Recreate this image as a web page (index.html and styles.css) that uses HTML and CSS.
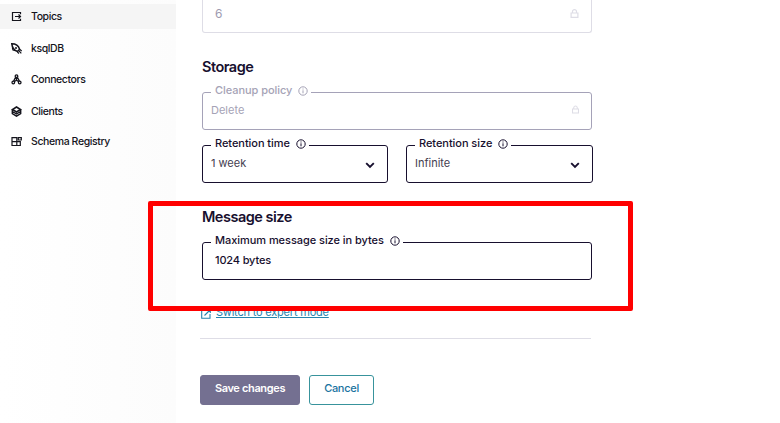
FILE: index.html
```html
<!DOCTYPE html>
<html lang="en">
<head>
    <meta charset="UTF-8">
    <meta name="viewport" content="width=device-width, initial-scale=1.0">
    <title>Topic settings</title>
    <link rel="stylesheet" href="styles.css">
</head>
<body>
    <svg class="defs">
        <symbol id="info" viewBox="0 0 10 10">
            <circle cx="5" cy="5" r="4.2" fill="none" stroke="currentColor" stroke-width="1"/>
            <path d="M5 4.3v3M5 2.5v1" stroke="currentColor" stroke-width="1"/>
        </symbol>
        <symbol id="lock" viewBox="0 0 8 9">
            <path d="M2 4V2.6a2 2 0 0 1 4 0V4M.6 4h6.8v4.4H.6z" fill="none" stroke="currentColor" stroke-width="1.2"/>
        </symbol>
        <symbol id="chevron" viewBox="0 0 10 7">
            <path d="M1.2 1.2L5 5l3.8-3.8" fill="none" stroke="currentColor" stroke-width="1.9"/>
        </symbol>
    </svg>

    <div class="page">
        <nav class="sidebar">
            <a class="nav-item active">
                <svg viewBox="0 0 11 11"><path d="M9.5 3.2V1.5h-8v8h8V7.8M4 5.5h5.5M7.5 3.5l2 2-2 2" fill="none" stroke="currentColor" stroke-width="1.2"/></svg>
                <span>Topics</span>
            </a>
            <a class="nav-item">
                <svg viewBox="0 0 11 11"><path d="M.8.8C4.5.8 7.600 3 8.600 6.200L6.500 8.500C3.200 7.400 1.200 4.500.8.8z" fill="none" stroke="currentColor" stroke-width="1.5"/><path d="M1.300 4.500L2 7l2.500.8M7.800 7.600l2.500 2.700M9 6.500l1.700 1.500M6.300 8.800L8 10.500" fill="none" stroke="currentColor" stroke-width="1.2"/><circle cx="5" cy="5" r="1" fill="currentColor"/></svg>
                <span>ksqlDB</span>
            </a>
            <a class="nav-item">
                <svg viewBox="0 0 11 11"><g fill="none" stroke="currentColor" stroke-width="1.3"><circle cx="5.5" cy="2.2" r="1.3"/><circle cx="2.3" cy="8.5" r="1.3"/><circle cx="8.7" cy="8.5" r="1.3"/><path d="M5.5 3.5v2.7M5.5 6.2L3.2 7.6M5.5 6.2l2.3 1.4M4.6 3.4L2.6 7M6.4 3.4L8.4 7"/></g></svg>
                <span>Connectors</span>
            </a>
            <a class="nav-item">
                <svg viewBox="0 0 11 11"><path d="M5.5 1l4 2.500-4 2.500-4-2.500z" fill="none" stroke="currentColor" stroke-width="1.5"/><path d="M1.300 3.500v4.200l4.200 2.500 4.200-2.500V3.500M1.500 5.500l4 2.500 4-2.500" fill="none" stroke="currentColor" stroke-width="1.4"/></svg>
                <span>Clients</span>
            </a>
            <a class="nav-item nav-schema">
                <svg viewBox="0 0 11 11"><path d="M1 1.7h4.8v7.800H1zM1 5.600h8.300v3.900H5.800M7.300 1.700h3v2.300h-3z" fill="none" stroke="currentColor" stroke-width="1.2"/></svg>
                <span>Schema Registry</span>
            </a>
        </nav>

        <main class="content">
            <div class="field field-locked">
                <span class="value">6</span>
                <svg class="lock lock-wide"><use href="#lock"/></svg>
            </div>

            <h2>Storage</h2>
            <div class="field field-disabled">
                <label>Cleanup policy <svg class="info"><use href="#info"/></svg></label>
                <span class="value">Delete</span>
                <svg class="lock"><use href="#lock"/></svg>
            </div>
            <div class="row">
                <div class="field select">
                    <label>Retention time <svg class="info"><use href="#info"/></svg></label>
                    <span class="value">1 week</span>
                    <svg class="chevron"><use href="#chevron"/></svg>
                </div>
                <div class="field select">
                    <label>Retention size <svg class="info"><use href="#info"/></svg></label>
                    <span class="value">Infinite</span>
                    <svg class="chevron"><use href="#chevron"/></svg>
                </div>
            </div>

            <h2>Message size</h2>
            <div class="field field-message">
                <label>Maximum message size in bytes <svg class="info"><use href="#info"/></svg></label>
                <span class="value">1024 bytes</span>
            </div>

            <a class="expert">
                <svg viewBox="0 0 10 10"><path d="M5 1H.7v8.300H9V5M3.500 6.500L9 1M6 .7h3.300V4" fill="none" stroke="currentColor" stroke-width="1.1"/></svg>
                <span>Switch to expert mode</span>
            </a>

            <div class="actions">
                <button class="save">Save changes</button>
                <button class="cancel">Cancel</button>
            </div>
        </main>
    </div>

    <div class="highlight"></div>
</body>
</html>
```

FILE: styles.css
```css
* {
    box-sizing: border-box;
}
body {
    margin: 0;
    background: #fff;
    color: #170f2e;
    font-family: Inter, "Liberation Sans", sans-serif;
    font-size: 11px;
    overflow: hidden;
}
.defs {
    display: none;
}
.page {
    display: flex;
    height: 423px;
}
.sidebar {
    width: 176px;
    padding-top: 4px;
    background: linear-gradient(90deg, #fff, #fcfcfc);
}
.nav-item {
    display: flex;
    align-items: center;
    gap: 9px;
    height: 25px;
    margin-bottom: 6.5px;
    padding-left: 11px;
    color: #14141c;
    font-size: 10.5px;
    font-weight: 500;
    letter-spacing: -0.4px;
}
.nav-item svg {
    width: 11px;
    height: 11px;
}
.nav-item.active {
    background: #f5f5f5;
}
.nav-schema {
    margin-top: -1px;
}
.content {
    width: 391px;
    margin-left: 26px;
}
h2 {
    margin: 24px 0 15px;
    font-size: 14.5px;
    font-weight: 600;
    line-height: 20px;
    letter-spacing: -0.5px;
}
.field {
    position: relative;
    display: flex;
    align-items: center;
    justify-content: space-between;
    width: 390px;
    height: 38px;
    padding: 0 12px 2px 8px;
    border: 1px solid #170f2e;
    border-radius: 3px;
}
.field label {
    position: absolute;
    top: -11px;
    left: 8px;
    display: flex;
    align-items: center;
    gap: 6px;
    height: 16px;
    padding: 0 3px 0 4px;
    background: #fff;
    font-weight: 500;
    letter-spacing: -0.05px;
    white-space: nowrap;
}
.info {
    width: 10px;
    height: 10px;
    margin-top: 2px;
}
.lock {
    width: 7px;
    height: 9px;
    color: #dedde6;
}
.lock-wide {
    width: 9px;
}
.field-locked {
    height: 33px;
    padding: 0 12px 6px 12px;
    border-color: #dedde6;
    border-top: none;
    border-radius: 0 0 3px 3px;
    color: #9e9bb0;
}
.field-locked .value {
    font-size: 12px;
}
.field-disabled {
    border-color: #a5a2b8;
    color: #a5a3b6;
}
.field-disabled .lock {
    margin-top: -1px;
}
.row {
    display: flex;
    gap: 18px;
    margin-top: 15px;
}
.row .field {
    flex: 0 0 186px;
}
.row .field + .field {
    flex-basis: 187px;
}
.select .value {
    color: #44404f;
}
.chevron {
    width: 10px;
    height: 7px;
    margin-top: 4px;
}
.field-message {
    padding-left: 12px;
}
.field-message .value {
    font-weight: 500;
    letter-spacing: -0.15px;
}
.expert {
    display: flex;
    align-items: center;
    gap: 5px;
    height: 14px;
    margin: 25px 0 0 -1px;
    color: #2484ae;
    letter-spacing: -0.2px;
}
.expert span {
    text-decoration: underline;
}
.expert svg {
    width: 10px;
    height: 10px;
    margin-top: 3px;
}
.actions {
    display: flex;
    gap: 9px;
    width: 391px;
    margin: 19px 0 0 -2px;
    padding-top: 36px;
    border-top: 1px solid #dedde6;
}
button {
    height: 30px;
    padding: 0 0 4px;
    border: 1px solid #747091;
    border-radius: 3px;
    font-family: inherit;
    font-size: 11px;
}
.save {
    width: 100px;
    background: #747091;
    color: #fff;
    font-weight: 600;
    letter-spacing: -0.35px;
}
.cancel {
    width: 65px;
    border-color: #38939c;
    background: #fff;
    color: #1a73a0;
    font-weight: 500;
    letter-spacing: -0.3px;
}
/* callout around the message size setting */
.highlight {
    position: absolute;
    top: 201px;
    left: 148px;
    width: 485px;
    height: 110px;
    border: 5px solid #f00;
    border-radius: 2px;
}
```
